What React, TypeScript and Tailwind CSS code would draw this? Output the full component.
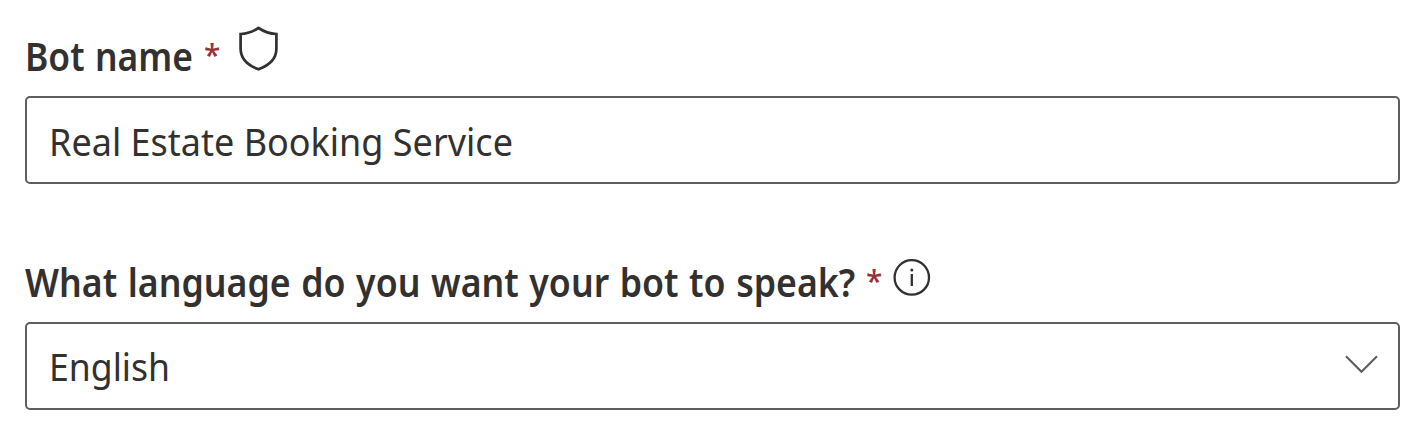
function Shield() {
  return (
    <svg className="mt-[-6px] ml-[19px] h-[48px] w-[42px] shrink-0" viewBox="0 0 42 48" fill="none" stroke="#323130" strokeWidth="2.7" aria-hidden="true">
      <path d="M21.5 4C26.8 7.5 32.6 9.7 39.4 10V24.6C39.4 34.4 32.5 41.4 21.5 45.3C10.5 41.4 3.6 34.4 3.6 24.6V10C10.4 9.7 16.2 7.5 21.5 4Z" />
    </svg>
  );
}

function Info() {
  return (
    <svg className="ml-[11px] h-[40px] w-[40px] shrink-0" viewBox="0 0 40 40" fill="none" aria-hidden="true">
      <circle cx="20.8" cy="21.4" r="17.2" stroke="#323130" strokeWidth="2.3" />
      <circle cx="20.8" cy="14.1" r="1.5" fill="#323130" />
      <path d="M20.8 18V30" stroke="#323130" strokeWidth="2.3" />
    </svg>
  );
}

function Required() {
  return <span className="mt-[-2px] w-[14px] shrink-0 origin-left scale-x-[0.96] text-[31px] font-medium text-[#983035]">*</span>;
}

export default function App() {
  const label = "flex h-[66px] items-start font-['Noto_Sans','Open_Sans',sans-serif] text-[39px] leading-[52px] font-[560] text-[#323130]";
  const field = "flex h-[88px] items-center justify-between rounded-[5px] border-2 border-[#605e5c] bg-white pr-[20px] pl-[22px]";
  const value = "origin-left whitespace-nowrap font-['Noto_Sans','Open_Sans',sans-serif] text-[39px] leading-[52px] text-[#323130]";
  return (
    <main className="h-[434px] w-[1423px] overflow-hidden bg-white pt-[30px] pr-[23px] pl-[25px]">
      <div className={label}>
        <span className="w-[179px] origin-left scale-x-[0.907] whitespace-nowrap [word-spacing:1.5px]">Bot name</span>
        <Required />
        <Shield />
      </div>
      <div className={field}>
        <span className={value + " mt-[2px] scale-x-[0.923]"}>Real Estate Booking Service</span>
      </div>
      <div className={label + " mt-[72px]"}>
        <span className="w-[841px] shrink-0">
          <span className="inline-block origin-left scale-x-[0.915] whitespace-nowrap [word-spacing:1.4px]">What language do you want your bot to speak?</span>
        </span>
        <Required />
        <Info />
      </div>
      <div className={field}>
        <span className={value + " scale-x-[0.912]"}>English</span>
        <svg className="mt-[-4px] h-[20px] w-[34px]" viewBox="0 0 34 20" fill="none" stroke="#605e5c" strokeWidth="2.1" aria-hidden="true">
          <path d="M2 2.2L17.5 17.7L33 2.2" />
        </svg>
      </div>
    </main>
  );
}
